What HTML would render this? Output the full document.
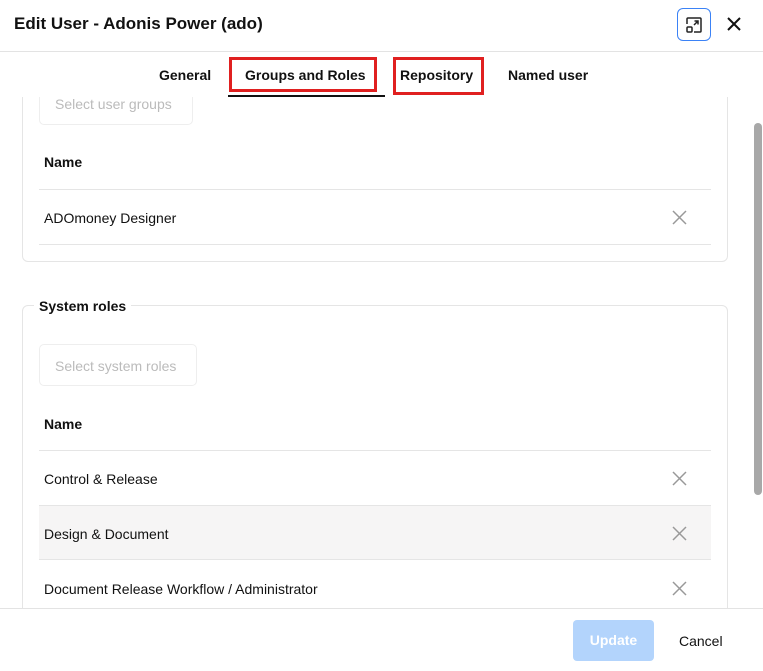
<!DOCTYPE html><html><head><style>
*{box-sizing:border-box;margin:0;padding:0}
body{width:763px;height:671px;overflow:hidden;background:#fff;font-family:"Liberation Sans",sans-serif;position:relative;color:#111}
.a{position:absolute}
.t{font-size:14px}
.b{font-weight:bold}
.x{position:absolute;width:14px;height:14px}
</style></head><body>
<div class="a b" style="left:14px;top:14px;font-size:17px">Edit User - Adonis Power (ado)</div>
<div class="a" style="left:677px;top:8px;width:34px;height:33px;border:1px solid #3b82f6;border-radius:6px"></div>
<svg class="a" style="left:684px;top:15px" width="20" height="20" viewBox="0 0 20 20" fill="none" stroke="#222" stroke-width="1.5"><path d="M3 9V4a1 1 0 0 1 1-1h12a1 1 0 0 1 1 1v12a1 1 0 0 1-1 1h-6"/><rect x="3" y="12" width="5" height="5" rx="1"/><path d="M10 10l4-4M10.5 6H14v3.5"/></svg>
<svg class="a" style="left:727px;top:17px" width="14" height="14" stroke="#111" stroke-width="2"><path d="M1 1l12 12M13 1L1 13"/></svg>
<div class="a" style="left:0;top:51px;width:763px;height:1px;background:#e3e3e3"></div>
<div class="a t b" style="left:159px;top:67px">General</div>
<div class="a t b" style="left:245px;top:67px">Groups and Roles</div>
<div class="a t b" style="left:400px;top:67px">Repository</div>
<div class="a t b" style="left:508px;top:67px">Named user</div>
<div class="a" style="left:229px;top:57px;width:148px;height:35px;border:3px solid #e02020"></div>
<div class="a" style="left:393px;top:57px;width:91px;height:38px;border:3px solid #e02020"></div>
<div class="a" style="left:228px;top:95px;width:157px;height:2px;background:#111"></div>
<div class="a" style="left:22px;top:97px;width:706px;height:511px;overflow:hidden">
 <div class="a" style="left:0;top:-20px;width:706px;height:185px;border:1px solid #e5e5e5;border-radius:6px"></div>
 <div class="a" style="left:17px;top:-9px;width:154px;height:37px;border:1px solid #eee;border-radius:5px"></div>
 <div class="a t" style="left:33px;top:-1px;color:#bbb">Select user groups</div>
 <div class="a t b" style="left:22px;top:57px">Name</div>
 <div class="a" style="left:17px;top:92px;width:672px;height:1px;background:#e5e5e5"></div>
 <div class="a t" style="left:22px;top:113px">ADOmoney Designer</div>
 <div class="a" style="left:17px;top:147px;width:672px;height:1px;background:#e5e5e5"></div>
 <div class="a" style="left:0;top:208px;width:706px;height:320px;border:1px solid #e5e5e5;border-radius:6px"></div>
 <div class="a t b" style="left:12px;top:201px;background:#fff;padding:0 5px">System roles</div>
 <div class="a" style="left:17px;top:247px;width:158px;height:42px;border:1px solid #eee;border-radius:5px"></div>
 <div class="a t" style="left:33px;top:261px;color:#bbb">Select system roles</div>
 <div class="a t b" style="left:22px;top:319px">Name</div>
 <div class="a" style="left:17px;top:353px;width:672px;height:1px;background:#e5e5e5"></div>
 <div class="a t" style="left:22px;top:374px">Control &amp; Release</div>
 <div class="a" style="left:17px;top:408px;width:672px;height:55px;background:#f6f5f5;border-top:1px solid #e5e5e5;border-bottom:1px solid #e5e5e5"></div>
 <div class="a t" style="left:22px;top:429px">Design &amp; Document</div>
 <div class="a t" style="left:22px;top:484px">Document Release Workflow / Administrator</div>
</div>
<svg class="a" style="left:672px;top:210px" width="15" height="15" stroke="#999" stroke-width="1.5"><path d="M1 1l13 13M14 1L1 14"/></svg>
<svg class="a" style="left:672px;top:471px" width="15" height="15" stroke="#999" stroke-width="1.5"><path d="M1 1l13 13M14 1L1 14"/></svg>
<svg class="a" style="left:672px;top:526px" width="15" height="15" stroke="#999" stroke-width="1.5"><path d="M1 1l13 13M14 1L1 14"/></svg>
<svg class="a" style="left:672px;top:581px" width="15" height="15" stroke="#999" stroke-width="1.5"><path d="M1 1l13 13M14 1L1 14"/></svg>
<div class="a" style="left:754px;top:123px;width:8px;height:372px;background:#a8a8a8;border-radius:4px"></div>
<div class="a" style="left:0;top:608px;width:763px;height:1px;background:#e3e3e3"></div>
<div class="a t b" style="left:573px;top:620px;width:81px;height:41px;background:#b3d4fc;border-radius:4px;color:#fff;text-align:center;line-height:41px">Update</div>
<div class="a t" style="left:679px;top:633px">Cancel</div>
</body></html>
